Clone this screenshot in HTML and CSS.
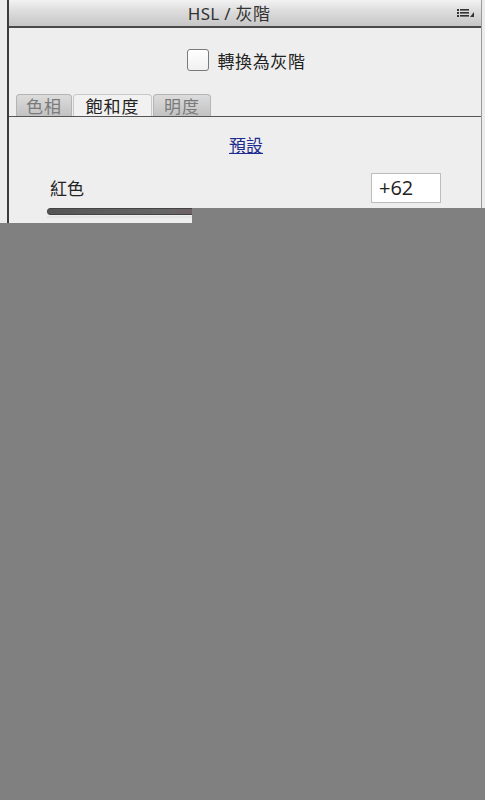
FILE: index.html
```html
<!DOCTYPE html>
<html lang="zh-Hant">
<head>
<meta charset="utf-8">
<title>HSL / 灰階</title>
<link rel="stylesheet" href="styles.css">
</head>
<body>
<div class="panel">
  <div class="header">
    <span class="title">HSL / 灰階</span>
    <svg class="menu" width="18" height="10" viewBox="0 0 18 10">
      <rect x="0" y="1" width="2" height="2" fill="#333"/>
      <rect x="0" y="4" width="2" height="2" fill="#333"/>
      <rect x="0" y="7" width="2" height="2" fill="#333"/>
      <rect x="3" y="1" width="9" height="1.6" fill="#333"/>
      <rect x="3" y="4" width="9" height="1.6" fill="#333"/>
      <rect x="3" y="7" width="9" height="1.6" fill="#333"/>
      <polygon points="17,4 17,9 13,9" fill="#333"/>
    </svg>
  </div>
  <div class="content">
    <label class="gray-row">
      <span class="checkbox"></span>
      <span class="gray-label">轉換為灰階</span>
    </label>
    <div class="tabs">
      <span class="tab t1">色相</span>
      <span class="tab t2 active">飽和度</span>
      <span class="tab t3">明度</span>
    </div>
    <div class="preset"><a href="#">預設</a></div>
    <div class="slider-row">
      <div class="slider-head">
        <span class="slider-name">紅色</span>
        <span class="value">+62</span>
      </div>
      <div class="track"></div>
      <div class="track-shadow"></div>
    </div>
  </div>
</div>
<div class="cover-a"></div>
<div class="cover-b"></div>
</body>
</html>
```

FILE: styles.css
```css
html, body {
  margin: 0;
  padding: 0;
  background: #ececec;
  width: 485px;
  height: 800px;
  overflow: hidden;
  font-family: "Noto Sans CJK TC", "Noto Sans", sans-serif;
}
.panel {
  margin-left: 7px;
  width: 475px;
  height: 800px;
  border-left: 2px solid #3c3c3c;
  border-right: 1px solid #9a9a9a;
  background: #eeeeee;
  box-sizing: border-box;
}
.header {
  height: 28px;
  box-sizing: border-box;
  border-bottom: 2px solid #4a4a4a;
  background: linear-gradient(#f2f2f2, #dedede 40%, #c6c6c6);
  display: flex;
  align-items: center;
  justify-content: center;
  position: relative;
}
.title {
  font-family: "Noto Sans", "Noto Sans CJK TC", sans-serif;
  font-size: 17px;
  color: #333;
  margin-left: -32px;
  margin-top: -1px;
  letter-spacing: 0.3px;
}
.menu {
  position: absolute;
  right: 6px;
  top: 8px;
}
.content {
  padding-top: 20px;
}
.gray-row {
  display: flex;
  align-items: center;
  justify-content: center;
  gap: 9px;
  height: 24px;
  margin-left: 2px;
}
.checkbox {
  width: 20px;
  height: 20px;
  border: 1px solid #7a7a7a;
  border-radius: 3px;
  background: linear-gradient(#ffffff, #f0f0f0);
}
.gray-label {
  font-size: 17px;
  color: #222;
  letter-spacing: 0.6px;
}
.tabs {
  margin-top: 20px;
  padding-left: 7px;
  height: 24px;
  display: flex;
  align-items: flex-end;
  border-bottom: 1px solid #555;
}
.tab {
  height: 22px;
  box-sizing: border-box;
  text-align: center;
  font-size: 17px;
  line-height: 21px;
  color: #7a7a7a;
  background: linear-gradient(#dcdcdc, #c2c2c2);
  border: 1px solid #b4b4b4;
  border-bottom: none;
  border-radius: 4px 4px 0 0;
  letter-spacing: 1px;
}
.t1 { width: 56px; }
.t2 { width: 79px; }
.t3 { width: 58px; }
.tab + .tab {
  margin-left: 1px;
}
.tab.active {
  background: #f1f1f1;
  color: #222;
  border-color: #c8c8c8;
}
.preset {
  text-align: center;
  margin-top: 15px;
  margin-left: 2px;
  height: 24px;
}
.preset a {
  font-size: 17px;
  color: #1f2c8f;
  text-decoration: underline;
}
.slider-row {
  margin-top: 17px;
  padding-left: 38px;
  padding-right: 40px;
}
.slider-head {
  display: flex;
  justify-content: space-between;
  align-items: center;
  height: 30px;
}
.slider-name {
  font-size: 17px;
  color: #222;
  margin-left: 3px;
  margin-top: -2px;
}
.value {
  width: 70px;
  height: 30px;
  box-sizing: border-box;
  border: 1px solid #bdbdbd;
  background: #fff;
  font-family: "Open Sans", "Noto Sans", sans-serif;
  font-size: 20px;
  line-height: 28px;
  padding-left: 7px;
  color: #222;
}
.track {
  margin-top: 5px;
  height: 5px;
  border-radius: 3px;
  background: linear-gradient(90deg, #555 0%, #666 30%, #8a5060 55%, #7b3c4c 100%);
  border: 1px solid #444;
}
.track-shadow {
  height: 2px;
  margin-top: 1px;
  background: #e4e4e4;
}
.cover-a {
  position: absolute;
  left: 192px;
  top: 208px;
  right: 0;
  height: 15px;
  background: #808080;
}
.cover-b {
  position: absolute;
  left: 0;
  top: 223px;
  right: 0;
  bottom: 0;
  background: #808080;
}
```
